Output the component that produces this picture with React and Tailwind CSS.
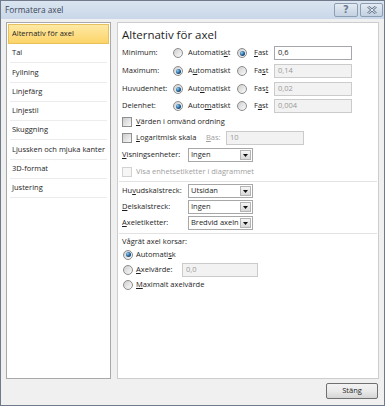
const MENU = ['Tal', 'Fyllning', 'Linjefärg', 'Linjestil', 'Skuggning', 'Ljussken och mjuka kanter', '3D-format', 'Justering'];

function U({ children }) {
  return <span className="underline underline-offset-1">{children}</span>;
}

function Radio({ on }) {
  return (
    <span className="flex h-[10px] w-[10px] shrink-0 items-center justify-center rounded-full border border-[#8c8c8c] bg-linear-to-br from-[#cfcfcf] to-[#fbfbfb]">
      {on && <span className="h-[5px] w-[5px] rounded-full bg-[radial-gradient(circle_at_35%_35%,#8fd0f7,#1d5a90_55%,#0b2c4e)]" />}
    </span>
  );
}

function Check({ disabled }) {
  return disabled
    ? <span className="h-[10px] w-[10px] shrink-0 border border-[#d2d2d2] bg-[#f6f6f6]" />
    : <span className="h-[10px] w-[10px] shrink-0 border border-[#8e8f8f] bg-linear-to-br from-[#cdcdcd] to-[#f8f8f8]" />;
}

function Field({ value, disabled, className }) {
  const look = disabled
    ? 'border-[#cbcbcb] bg-[#f2f2f2] text-[#9a9a9a]'
    : 'border-[#a5a7ad] bg-white text-[#1e1e1e]';
  return (
    <div className={`flex h-[14px] items-center border pl-[3px] ${look} ${className}`}>{value}</div>
  );
}

function Select({ value }) {
  return (
    <div className="flex h-[14px] w-[65px] items-center justify-between border border-[#a7a7a7] bg-white pl-[2px]">
      <span>{value}</span>
      <span className="m-px flex h-[10px] w-[11px] items-center justify-center border border-[#b4b4b4] bg-linear-to-b from-[#f6f6f6] to-[#d8d8d8]">
        <svg width="5" height="3" viewBox="0 0 5 3"><path d="M0 0h5L2.5 3z" fill="#111" /></svg>
      </span>
    </div>
  );
}

// one "Minimum / Maximum / ..." row: label, two radios, value box
function AxisRow({ label, auto, fast, fixed, value, h }) {
  return (
    <div className={`flex items-center ${h}`}>
      <span className="w-[51px]">{label}</span>
      <span className="flex w-[64px] items-center gap-[5px]"><Radio on={!fixed} /><span>{auto}</span></span>
      <span className="flex w-[37px] items-center gap-[7px]"><Radio on={fixed} /><span>{fast}</span></span>
      <Field value={value} disabled={!fixed} className="w-[78px]" />
    </div>
  );
}

function CaptionBtn({ children }) {
  return (
    <div className="flex h-[14px] items-center justify-center rounded-[2px] border border-[#8d9db2] bg-linear-to-b from-[#e4ebf3] to-[#c3d1e1]">
      {children}
    </div>
  );
}

export default function App() {
  return (
    <div className="flex h-[406px] w-[385px] flex-col overflow-hidden border border-[#6f7b8a] bg-[#f0f0f0] font-['Open_Sans','Noto_Sans',sans-serif] text-[7.5px] leading-none text-[#1e1e1e]">
      {/* title bar */}
      <div className="flex h-[18px] shrink-0 items-start justify-between bg-linear-to-b from-[#dbe5f1] to-[#c9d7e8] pl-[4px] pr-px">
        <span className="self-center text-[8.3px] text-[#3a4657]">Formatera axel</span>
        <div className="flex gap-[2px] pt-[2px]">
          <div className="w-[24px]">
            <CaptionBtn>
              <span className="font-['DejaVu_Sans',sans-serif] text-[10px] font-bold text-[#6b7b90]">?</span>
            </CaptionBtn>
          </div>
          <div className="w-[23px]">
            <CaptionBtn>
              <svg width="10" height="8" viewBox="0 0 10 8">
                <path d="M1 0.5L9 7.5M9 0.5L1 7.5" stroke="#6b7b90" strokeWidth="2.6" />
                <path d="M1 0.5L9 7.5M9 0.5L1 7.5" stroke="#e9eef4" strokeWidth="1" />
              </svg>
            </CaptionBtn>
          </div>
        </div>
      </div>

      {/* body */}
      <div className="flex flex-1 flex-col px-[5px] pb-[6px] pt-[3px]">
        <div className="flex h-[357px] gap-[6px]">
          {/* category list */}
          <div className="flex w-[105px] flex-col border border-[#a9a9a9] bg-white px-px pt-px">
            <div className="flex h-[20px] shrink-0 items-center border border-[#e6c15d] bg-linear-to-b from-[#fee9a4] to-[#fcd467] pl-[3px]">
              Alternativ för axel
            </div>
            {MENU.map((t) => (
              <div key={t} className="mx-[2px] flex h-[19.25px] shrink-0 items-center border-b border-[#ececec] pl-[2px]">
                {t}
              </div>
            ))}
          </div>

          {/* options */}
          <div className="flex flex-1 flex-col border border-[#cdcdcd] bg-white pl-[4px] pr-px">
            <div className="h-[21px] shrink-0 pt-[4px] text-[11.5px] leading-[15px]">Alternativ för axel</div>

            <AxisRow h="h-[18px]" label="Minimum:" auto={<>Automatis<U>k</U>t</>} fast={<><U>F</U>ast</>} fixed value="0,6" />
            <AxisRow h="h-[18px]" label="Maximum:" auto={<>A<U>u</U>tomatiskt</>} fast={<>Fa<U>s</U>t</>} value="0,14" />
            <AxisRow h="h-[18px]" label="Huvudenhet:" auto={<>Aut<U>o</U>matiskt</>} fast={<>Fas<U>t</U></>} value="0,02" />
            <AxisRow h="h-[16px]" label="Delenhet:" auto={<>Auto<U>m</U>atiskt</>} fast={<>F<U>a</U>st</>} value="0,004" />

            <div className="flex h-[15px] items-center gap-[4px]"><Check /><span><U>V</U>ärden i omvänd ordning</span></div>
            <div className="flex h-[17px] items-center">
              <span className="flex w-[84px] items-center gap-[4px]"><Check /><span><U>L</U>ogaritmisk skala</span></span>
              <span className="w-[20px] text-[#a0a0a0]"><U>B</U>as:</span>
              <Field value="10" disabled className="w-[78px]" />
            </div>
            <div className="flex h-[18px] items-center">
              <span className="w-[66px]"><U>V</U>isningsenheter:</span>
              <Select value="Ingen" />
            </div>
            <div className="flex h-[16px] items-center gap-[4px] text-[#a0a0a0]"><Check disabled /><span>Visa enhetsetiketter i diagrammet</span></div>

            <div className="h-[3px] shrink-0 pt-px"><div className="-ml-[3px] h-px bg-[#e2e2e2]" /></div>

            <div className="flex h-[16px] items-center">
              <span className="w-[66px]">Hu<U>v</U>udskalstreck:</span>
              <Select value="Utsidan" />
            </div>
            <div className="flex h-[16px] items-center">
              <span className="w-[66px]"><U>D</U>elskalstreck:</span>
              <Select value="Ingen" />
            </div>
            <div className="flex h-[16px] items-center">
              <span className="w-[66px]"><U>A</U>xeletiketter:</span>
              <Select value="Bredvid axeln" />
            </div>

            <div className="h-[4px] shrink-0 pt-[2px]"><div className="-ml-[3px] h-px bg-[#e2e2e2]" /></div>

            <div className="flex h-[13px] items-center">Vågrät axel korsar:</div>
            <div className="flex h-[13px] items-center gap-[3px] pl-px"><Radio on /><span>Automati<U>s</U>k</span></div>
            <div className="flex h-[17px] items-center pl-px">
              <span className="flex w-[59px] items-center gap-[3px]"><Radio /><span><U>A</U>xelvärde:</span></span>
              <Field value="0,0" disabled className="w-[76px]" />
            </div>
            <div className="flex h-[14px] items-center gap-[3px] pl-px"><Radio /><span><U>M</U>aximalt axelvärde</span></div>
          </div>
        </div>

        {/* footer */}
        <div className="flex flex-1 items-end justify-end pr-px">
          <button className="flex h-[16px] w-[52px] items-center justify-center rounded-[2px] border border-[#707070] bg-linear-to-b from-[#f3f3f3] via-[#eaeaea] to-[#d5d5d5]">
            Stäng
          </button>
        </div>
      </div>
    </div>
  );
}
